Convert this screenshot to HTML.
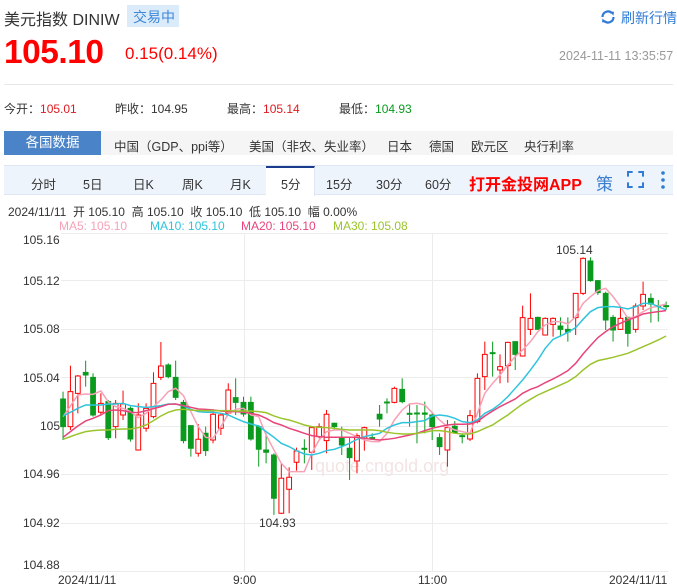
<!DOCTYPE html>
<html><head><meta charset="utf-8"><style>
*{margin:0;padding:0;box-sizing:border-box}
body{width:677px;height:586px;background:#fff;font-family:"Liberation Sans","Noto Sans CJK SC",sans-serif;position:relative;overflow:hidden;color:#333}
.a{position:absolute;white-space:nowrap}
</style></head><body>
<div class="a" style="left:4px;top:6px;font-size:16px;color:#333">美元指数 <span style="font-size:16px">DINIW</span></div>
<div class="a" style="left:127px;top:5px;width:52px;height:22px;background:#dcebfa"></div>
<div class="a" style="left:133px;top:7px;font-size:14px;color:#3c87d8">交易中</div>
<svg class="a" style="left:600px;top:9px" width="16" height="16" viewBox="0 0 16 16"><path d="M2.5 8a5.5 5.5 0 0 1 9.5-3.8" fill="none" stroke="#2f7bd6" stroke-width="2.2"/><path d="M13.5 8a5.5 5.5 0 0 1-9.5 3.8" fill="none" stroke="#2f7bd6" stroke-width="2.2"/><path d="M10 2.5l4 0.3-0.6 4z" fill="#2f7bd6"/><path d="M6 13.5l-4-0.3 0.6-4z" fill="#2f7bd6"/></svg>
<div class="a" style="left:621px;top:8px;font-size:14px;color:#2f7bd6">刷新行情</div>
<div class="a" style="left:4px;top:34px;font-size:33.5px;font-weight:bold;color:#f00;letter-spacing:-0.5px">105.10</div>
<div class="a" style="left:125px;top:44px;font-size:17px;color:#f00">0.15(0.14%)</div>
<div class="a" style="left:559px;top:49px;font-size:12.5px;color:#999">2024-11-11 13:35:57</div>
<div class="a" style="left:4px;top:84px;width:669px;height:1px;background:#e8e8e8"></div>
<div class="a" style="left:4px;top:100px;font-size:12px">今开：<span style="color:#e0191f">105.01</span></div>
<div class="a" style="left:115px;top:100px;font-size:12px">昨收：104.95</div>
<div class="a" style="left:227px;top:100px;font-size:12px">最高：<span style="color:#e0191f">105.14</span></div>
<div class="a" style="left:339px;top:100px;font-size:12px">最低：<span style="color:#0a9a1e">104.93</span></div>
<div class="a" style="left:4px;top:131px;width:669px;height:24px;background:#f5f5f5"></div>
<div class="a" style="left:4px;top:131px;width:97px;height:24px;background:#4a83c8;color:#fff;font-size:13.5px;line-height:24px;text-align:center">各国数据</div>
<div class="a" style="left:114px;top:136px;font-size:12.5px;color:#333">中国（GDP、ppi等）</div>
<div class="a" style="left:249px;top:136px;font-size:12.5px;color:#333">美国（非农、失业率）</div>
<div class="a" style="left:387px;top:136px;font-size:12.5px">日本</div>
<div class="a" style="left:429px;top:136px;font-size:12.5px">德国</div>
<div class="a" style="left:471px;top:136px;font-size:12.5px">欧元区</div>
<div class="a" style="left:524px;top:136px;font-size:12.5px">央行利率</div>
<div class="a" style="left:4px;top:165px;width:669px;height:30px;background:#eef4fc;border-top:1px solid #dde6f2;border-bottom:1px solid #dde6f2"></div>
<div class="a" style="left:266px;top:166px;width:49px;height:30px;background:#fff;border-top:2px solid #1b3c8c;border-right:1px solid #dde6f2"></div>
<div class="a" style="top:174px;left:0;font-size:12.5px;color:#333;width:677px">
<span class="a" style="left:31px">分时</span><span class="a" style="left:83px">5日</span><span class="a" style="left:133px">日K</span><span class="a" style="left:182px">周K</span><span class="a" style="left:230px">月K</span><span class="a" style="left:281px">5分</span><span class="a" style="left:326px">15分</span><span class="a" style="left:376px">30分</span><span class="a" style="left:425px">60分</span></div>
<div class="a" style="left:469px;top:171px;font-size:16px;font-weight:bold;color:#f00">打开金投网APP</div>
<div class="a" style="left:596px;top:170px;font-size:17px;color:#3c7fd0">策</div>
<svg class="a" style="left:627px;top:171px" width="17" height="17" viewBox="0 0 18 18" fill="none" stroke="#2f7bd6" stroke-width="2.2"><path d="M1 6V1h5M12 1h5v5M17 12v5h-5M6 17H1v-5"/></svg>
<svg class="a" style="left:660px;top:170px" width="6" height="20"><circle cx="3" cy="3" r="1.8" fill="#2f7bd6"/><circle cx="3" cy="10" r="1.8" fill="#2f7bd6"/><circle cx="3" cy="17" r="1.8" fill="#2f7bd6"/></svg>
<div class="a" style="left:8px;top:203px;font-size:12px;color:#333">2024/11/11 &nbsp;开 105.10 &nbsp;高 105.10 &nbsp;收 105.10 &nbsp;低 105.10 &nbsp;幅 0.00%</div>
<div class="a" style="left:59px;top:219px;font-size:12px;color:#f7a1b7">MA5: 105.10</div>
<div class="a" style="left:150px;top:219px;font-size:12px;color:#2ec4dc">MA10: 105.10</div>
<div class="a" style="left:241px;top:219px;font-size:12px;color:#e8447a">MA20: 105.10</div>
<div class="a" style="left:333px;top:219px;font-size:12px;color:#9bc42c">MA30: 105.08</div>
<svg class="a" style="left:0;top:0" width="677" height="586">
<g stroke="#ececec" stroke-width="1">
<line x1="61" y1="233.5" x2="668" y2="233.5"/><line x1="61" y1="280.5" x2="668" y2="280.5"/><line x1="61" y1="329.5" x2="668" y2="329.5"/><line x1="61" y1="377.5" x2="668" y2="377.5"/><line x1="61" y1="426.5" x2="668" y2="426.5"/><line x1="61" y1="474.5" x2="668" y2="474.5"/><line x1="61" y1="523.5" x2="668" y2="523.5"/><line x1="61" y1="571.5" x2="668" y2="571.5"/>
<line x1="244.5" y1="233" x2="244.5" y2="571"/><line x1="432.5" y1="233" x2="432.5" y2="571"/>
</g>
<g font-size="12" fill="#333" font-family="Liberation Sans,sans-serif">
<text x="23" y="244">105.16</text><text x="23" y="285">105.12</text><text x="23" y="333">105.08</text><text x="23" y="382">105.04</text><text x="40" y="430">105</text><text x="23" y="478">104.96</text><text x="23" y="527">104.92</text><text x="23" y="569">104.88</text>
<text x="58" y="584">2024/11/11</text><text x="233" y="584">9:00</text><text x="418" y="584">11:00</text><text x="609" y="584">2024/11/11</text>
<text x="556" y="254">105.14</text><text x="259" y="527">104.93</text>
</g>
<text x="315" y="472" font-size="18" fill="#f3e4e4" font-family="Liberation Sans,sans-serif">quote.cngold.org</text>
<g id="c" transform="translate(0,200) scale(0.4348,0.3333)"></g>
</svg>
<script>
var d=[[145,'g',597,680,575,720],[162,'r',575,680,497,690],[179,'r',528,580,525,640],[197,'g',517,525,482,560],[214,'g',532,645,520,650],[232,'r',610,637,580,645],[249,'g',605,713,600,720],[266,'r',610,680,600,715],[283,'r',612,645,572,660],[300,'g',625,717,620,725],[318,'r',645,750,610,752],[336,'r',625,685,610,695],[353,'r',550,650,517,655],[370,'r',498,532,426,540],[387,'g',495,530,490,535],[404,'g',532,592,482,600],[422,'g',607,722,600,730],[439,'g',677,745,677,770],[456,'r',718,760,672,770],[473,'g',700,752,680,768],[490,'r',643,720,628,730],[508,'r',645,685,640,705],[525,'r',570,640,550,645],[542,'g',593,607,535,645],[560,'g',607,642,590,650],[577,'g',607,717,590,722],[595,'g',680,748,675,800],[612,'g',750,757,700,790],[630,'g',765,895,760,945],[647,'r',835,940,790,942],[665,'r',832,868,802,940],[682,'r',753,787,743,812],[700,'g',745,748,718,790],[717,'r',683,757,680,810],[734,'r',680,710,670,715],[751,'r',643,722,630,760],[769,'g',670,680,668,690],[786,'g',715,735,680,765],[804,'g',745,773,710,840],[821,'r',707,783,700,820],[838,'r',683,715,680,752],[856,'g',713,717,700,720],[873,'g',643,657,615,680],[890,'g',606,609,595,640],[907,'r',565,607,560,610],[925,'g',568,605,535,610],[942,'g',640,643,610,680],[959,'g',639,642,615,730],[977,'g',639,643,605,700],[994,'g',645,680,640,720],[1011,'g',713,740,700,765],[1029,'r',683,750,660,800],[1046,'g',679,699,663,700],[1063,'g',707,710,700,730],[1081,'r',647,717,630,723],[1098,'r',535,665,520,670],[1115,'r',463,530,425,570],[1133,'g',458,461,425,530],[1150,'r',500,510,463,550],[1168,'r',427,497,425,548],[1185,'g',425,463,425,510],[1202,'r',353,468,317,470],[1220,'r',355,388,280,405],[1237,'g',352,388,350,388],[1254,'r',355,405,352,407],[1272,'r',355,373,352,410],[1289,'g',378,388,352,410],[1306,'g',388,396,352,425],[1324,'r',280,353,280,405],[1341,'r',175,280,172,285],[1358,'g',183,242,172,245],[1375,'g',242,278,240,285],[1393,'g',280,360,275,390],[1410,'g',352,390,345,425],[1427,'r',355,388,320,390],[1444,'g',352,400,350,440],[1462,'r',318,388,310,398],[1479,'r',283,318,245,330],[1497,'g',295,312,280,368],[1514,'g',317,320,300,365],[1532,'g',317,320,305,330]];
var s='';d.forEach(function(c){var x=c[0],col=c[1]=='g'?'#0a9a1e':'#f00';s+='<line x1="'+x+'" y1="'+c[4]+'" x2="'+x+'" y2="'+c[5]+'" stroke="'+col+'" vector-effect="non-scaling-stroke"/>';s+='<rect x="'+(x-5.5)+'" y="'+c[2]+'" width="11" height="'+Math.max(c[3]-c[2],3)+'" fill="'+(c[1]=='g'?col:'#fff')+'" stroke="'+col+'" vector-effect="non-scaling-stroke"/>';});
var ma=[['#f7a1b7','145,650 162,618 179,585 197,582 214,583 232,573 249,606 266,620 283,625 300,635 318,653 336,640 353,620 370,600 387,575 404,565 422,587 439,635 456,680 473,712 490,715 508,680 525,642 542,628 560,625 577,645 595,650 612,705 630,750 647,790 665,815 682,815 700,815 717,760 734,720 751,695 769,690 786,690 804,700 821,710 838,720 856,725 873,725 890,700 907,660 925,630 942,612 959,610 977,615 994,638 1011,660 1029,680 1046,690 1063,695 1081,700 1098,640 1115,580 1133,550 1150,525 1168,495 1185,470 1202,450 1220,425 1237,395 1254,375 1272,365 1289,365 1306,372 1324,350 1341,310 1358,290 1375,272 1393,265 1410,290 1427,320 1444,355 1462,350 1479,335 1497,323 1514,318 1532,312'],['#2ec4dc','145,648 162,637 179,625 197,615 214,615 232,615 249,612 266,612 283,610 300,617 318,620 336,622 353,620 370,617 387,612 404,612 422,618 439,628 456,635 473,637 490,637 508,640 525,645 542,655 560,665 577,672 595,678 612,695 630,712 647,730 665,740 682,752 700,762 717,765 734,760 751,752 769,748 786,740 804,730 821,718 838,710 856,705 873,700 890,685 907,675 925,668 942,668 959,665 977,662 994,648 1011,645 1029,648 1046,655 1063,665 1081,668 1098,660 1115,640 1133,628 1150,612 1168,590 1185,565 1202,540 1220,510 1237,480 1254,445 1272,418 1289,408 1306,397 1324,383 1341,358 1358,335 1375,323 1393,320 1410,320 1427,322 1444,327 1462,320 1479,310 1497,310 1514,320 1532,330'],['#e8447a','145,712 162,695 179,678 197,663 214,655 232,645 249,632 266,630 283,632 300,637 318,638 336,632 353,626 370,620 387,613 404,612 422,617 439,622 456,627 473,628 490,630 508,633 525,635 542,635 560,637 577,640 595,645 612,655 630,668 647,675 665,685 682,692 700,700 717,707 734,710 751,712 769,712 786,712 804,712 821,712 838,715 856,718 873,720 890,718 907,715 925,710 942,705 959,700 977,692 994,685 1011,680 1029,675 1046,673 1063,673 1081,672 1098,665 1115,648 1133,633 1150,620 1168,608 1185,597 1202,580 1220,568 1237,560 1254,548 1272,537 1289,525 1306,512 1324,490 1341,462 1358,437 1375,413 1393,395 1410,380 1427,370 1444,360 1462,352 1479,342 1497,338 1514,335 1532,332'],['#9bc42c','145,718 162,710 179,702 197,695 214,692 232,690 249,690 266,688 283,687 300,687 318,683 336,675 353,662 370,648 387,637 404,630 422,628 439,630 456,632 473,632 490,632 508,632 525,632 542,633 560,633 577,633 595,635 612,638 630,648 647,655 665,660 682,667 700,675 717,680 734,682 751,683 769,685 786,688 804,690 821,690 838,690 856,690 873,692 890,697 907,700 925,702 942,702 959,700 977,697 994,692 1011,692 1029,695 1046,700 1063,702 1081,702 1098,695 1115,685 1133,675 1150,660 1168,645 1185,628 1202,612 1220,598 1237,585 1254,575 1272,565 1289,555 1306,545 1324,530 1341,510 1358,493 1375,482 1393,477 1410,472 1427,466 1444,460 1462,450 1479,440 1497,430 1514,420 1532,408']];
ma.forEach(function(m){s+='<polyline points="'+m[1]+'" fill="none" stroke="'+m[0]+'" stroke-width="1.5" vector-effect="non-scaling-stroke"/>';});
document.getElementById('c').innerHTML=s;
</script>
</body></html>
